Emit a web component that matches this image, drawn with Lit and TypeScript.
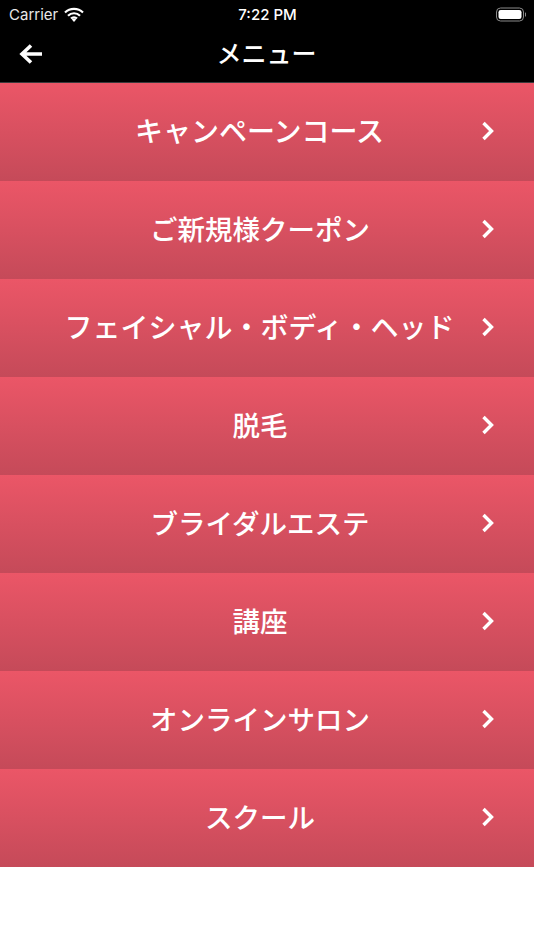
import { LitElement, html, css } from "lit";
import { customElement } from "lit/decorators.js";

const ITEMS = [
  { t: "キャンペーンコース", wide: true },
  { t: "ご新規様クーポン", wide: false },
  { t: "フェイシャル・ボディ・ヘッド", wide: true },
  { t: "脱毛", wide: false },
  { t: "ブライダルエステ", wide: false },
  { t: "講座", wide: false },
  { t: "オンラインサロン", wide: false },
  { t: "スクール", wide: false },
];

@customElement("app-root")
export class AppRoot extends LitElement {
  static styles = css`
    :host { display: block; width: 534px; height: 950px; background: #fff; font-family: "Inter", "Noto Sans CJK JP", sans-serif; overflow: hidden; }
    .top { background: #000; color: #fff; height: 83px; display: flex; flex-direction: column; box-sizing: border-box; border-bottom: 1px solid #3a3a3c; }
    .status { height: 28px; display: grid; grid-template-columns: 1fr auto 1fr; align-items: center; padding: 0 8px 0 9px; font-size: 15px; font-family: "Inter", sans-serif; }
    .left { display: flex; align-items: center; gap: 6px; color: #e8e8e8; }
    .time { font-weight: 500; }
    .right { justify-self: end; display: flex; }
    .nav { flex: 1; position: relative; display: flex; align-items: center; justify-content: center; padding-bottom: 2px; }
    .title { font-size: 25px; font-weight: 500; line-height: 1; margin-left: -1px; }
    .back { position: absolute; left: 19px; top: 15px; }
    .row { height: 98px; box-sizing: border-box; display: flex; align-items: center; justify-content: center; position: relative; background: linear-gradient(#eb5667, #c54a59); color: #fff; font-size: 27.5px; font-weight: 500; padding: 0 14px 5px 0; }
    .row.wide { font-size: 28px; padding-right: 15px; }
    .chev { position: absolute; left: 480px; top: 37px; }
  `;
  render() {
    return html`
      <div class="top">
        <div class="status">
          <div class="left">Carrier
            <svg width="20" height="15" viewBox="0 0 20 15"><path d="M1 5.5a13 13 0 0 1 18 0M4 8.700a8.600 8.600 0 0 1 12 0M7 11.600a4.200 4.200 0 0 1 6 0" fill="none" stroke="#fff" stroke-width="2.200"/><path d="M10 15l-2.200-2.400a3 3 0 0 1 4.400 0z" fill="#fff"/></svg>
          </div>
          <div class="time">7:22 PM</div>
          <div class="right">
            <svg width="30" height="15" viewBox="0 0 30 15"><rect x="0.5" y="1" width="27" height="13" rx="4" fill="none" stroke="#8a8a8a"/><rect x="2.500" y="3" width="23" height="9" rx="2.200" fill="#fff"/><path d="M29 5.500a2 2 0 0 1 0 4z" fill="#8a8a8a"/></svg>
          </div>
        </div>
        <div class="nav">
          <svg class="back" width="24" height="22" viewBox="0 0 24 22"><path d="M12 2.500 3 11l9 8.500M3.500 11H23" fill="none" stroke="#fff" stroke-width="3.600"/></svg>
          <div class="title">メニュー</div>
        </div>
      </div>
      ${ITEMS.map(i => html`<div class="row ${i.wide ? "wide" : ""}">${i.t}
        <svg class="chev" width="15" height="22" viewBox="0 0 15 22"><path d="M3.500 3 11.500 11l-8 8" fill="none" stroke="#fff" stroke-width="3.400"/></svg>
      </div>`)}
    `;
  }
}
